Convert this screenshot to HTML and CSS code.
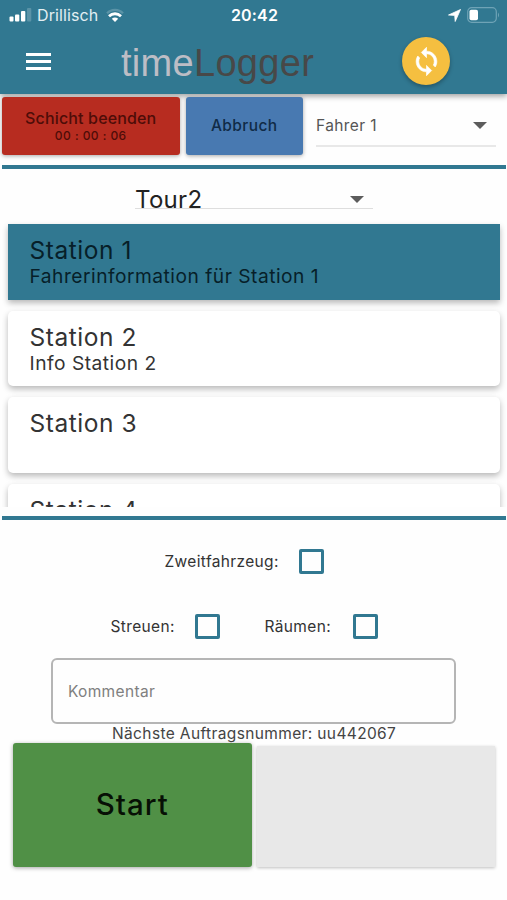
FILE: index.html
```html
<!DOCTYPE html>
<html lang="de">
<head>
<meta charset="utf-8">
<title>timeLogger</title>
<link rel="stylesheet" href="styles.css">
</head>
<body>
<header class="header">
  <div class="status">
    <div class="carrier">
      <svg class="signal" width="24" height="14" viewBox="0 0 24 14" fill="#fff"><rect x="0.5" y="8.5" width="4" height="5" rx="1"/><rect x="6" y="6.500" width="4.300" height="7" rx="1"/><rect x="12" y="3" width="4.300" height="10.500" rx="1"/><rect x="18" y="0" width="4.300" height="13.500" rx="1" opacity=".2"/></svg>
      <span class="carrier-name">Drillisch</span>
      <svg class="wifi" width="18" height="15" viewBox="0 0 18 15" fill="none" stroke="#fff"><path d="M1 5.2C5.500.7 12.500.7 17 5.200" stroke-width="2.300" opacity=".2"/><path d="M3 8.200C6.500 4.900 11.500 4.900 15 8.200" stroke-width="2.800"/><path d="M5.800 10.800Q9 8 12.200 10.800L9 14Z" fill="#fff" stroke="none"/></svg>
    </div>
    <span class="clock">20:42</span>
    <div class="power">
      <svg width="13" height="13" viewBox="0 0 13 13"><path d="M12.500.5 7.200 12.500 6.700 6.400.5 6Z" fill="#fff" stroke="#fff" stroke-width=".8" stroke-linejoin="round"/></svg>
      <svg width="33" height="16" viewBox="0 0 33 16"><rect x=".7" y=".7" width="28.600" height="14.600" rx="4" fill="none" stroke="#6fa3b6" stroke-width="1.200"/><rect x="2.500" y="2.800" width="8.500" height="10.400" rx="1.800" fill="#fff"/><path d="M31 5.500q2 2.500 0 5Z" fill="#6fa3b6"/></svg>
    </div>
  </div>
  <div class="toolbar">
    <svg class="menu" width="25" height="17" viewBox="0 0 25 17" fill="#fff"><path d="M0 0h25v3H0zM0 7h25v3H0zM0 14h25v3H0z"/></svg>
    <h1 class="brand"><span class="brand-light">time</span>Logger</h1>
    <button class="sync" aria-label="Sync"><svg width="31" height="31" viewBox="0 0 24 24" fill="#fff" stroke="#fff" stroke-width=".5"><path d="M12 4V1L8 5l4 4V6c3.310 0 6 2.690 6 6 0 1.010-.25 1.970-.7 2.800l1.460 1.460C19.540 15.030 20 13.570 20 12c0-4.420-3.580-8-8-8zm0 14c-3.310 0-6-2.690-6-6 0-1.010.25-1.970.7-2.800L5.240 7.740C4.460 8.970 4 10.430 4 12c0 4.420 3.580 8 8 8v3l4-4-4-4v3z"/></svg></button>
  </div>
</header>
<main>
  <section class="shift">
    <button class="btn end"><span class="end-label">Schicht beenden</span><span class="timer">00 : 00 : 06</span></button>
    <button class="btn cancel"><span>Abbruch</span></button>
    <div class="driver"><span>Fahrer 1</span><i class="caret"></i></div>
  </section>
  <section class="tour-area">
    <div class="tour"><span>Tour2</span><i class="caret"></i></div>
    <div class="list">
      <article class="card active"><h2>Station 1</h2><p>Fahrerinformation für Station 1</p></article>
      <article class="card"><h2>Station 2</h2><p>Info Station 2</p></article>
      <article class="card"><h2>Station 3</h2></article>
      <article class="card"><h2>Station 4</h2></article>
    </div>
  </section>
  <section class="options">
    <div class="row second"><label><span>Zweitfahrzeug:</span><i class="box"></i></label></div>
    <div class="row jobs"><label class="spread"><span>Streuen:</span><i class="box"></i></label><label><span>Räumen:</span><i class="box"></i></label></div>
  </section>
  <div class="comment"><span>Kommentar</span></div>
  <p class="next">Nächste Auftragsnummer: uu442067</p>
  <div class="actions"><button class="btn start"><span>Start</span></button><button class="btn empty" aria-label="Stop"></button></div>
</main>
</body>
</html>
```
FILE: styles.css
```css
* { box-sizing: border-box; }
body { margin: 0; width: 507px; height: 900px; overflow: hidden; background: #fefefe; color: #333; font-family: Inter, sans-serif; }
h1, h2, p { margin: 0; font-weight: 400; }
svg { display: block; }
span { white-space: nowrap; }
button { border: 0; padding: 0; font: inherit; color: inherit; }

.header { height: 94px; background: #317891; box-shadow: 0 2px 6px rgba(0,0,0,.4); }
.status { display: grid; grid-template-columns: 1fr auto 1fr; align-items: center; height: 30px; padding: 0 7px 0 9px; color: #fff; }
.carrier { display: flex; align-items: center; }
.carrier-name { margin-left: 4px; font-size: 16px; line-height: 20px; letter-spacing: .1px; color: #e3eff3; }
.wifi { margin-left: 8px; }
.clock { font-size: 16px; font-weight: 600; letter-spacing: .2px; }
.power { display: flex; justify-content: flex-end; align-items: center; gap: 6px; }
.toolbar { display: flex; align-items: center; height: 62px; padding-left: 26px; }
.brand { width: 193px; margin: 3px 88px 0 70px; font: 38px/44px "Liberation Sans", sans-serif; letter-spacing: .3px; color: #484848; white-space: nowrap; }
.brand-light { color: #bdbdc5; }
.sync { display: grid; place-items: center; width: 48px; height: 48px; border-radius: 50%; background: #f5bf40; box-shadow: 0 2px 4px rgba(0,0,0,.3); }

.shift { display: flex; height: 75px; margin: 0 1px 0 2px; padding: 2.500px 10px 0 0; border-bottom: 4px solid #317891; }
.btn { display: flex; align-items: center; justify-content: center; border-radius: 3px; box-shadow: 0 1px 4px rgba(0,0,0,.35); }
.end { flex-direction: column; width: 177.500px; height: 58px; background: #b72c20; color: #4e0d08; }
.end-label { font-size: 16px; line-height: 20px; font-weight: 500; letter-spacing: .15px; }
.timer { font-size: 12px; line-height: 15px; font-weight: 500; letter-spacing: .45px; }
.cancel { width: 116.500px; height: 58px; margin-left: 6.500px; padding-bottom: 1px; background: #4879b1; color: #102b47; font-size: 15.500px; font-weight: 500; letter-spacing: .4px; }
.driver { display: flex; align-items: center; justify-content: space-between; width: 180px; height: 50px; margin-left: 13.500px; padding: 10px 9px 0 0; border-bottom: 2px solid #e8e8e8; font-size: 15.500px; letter-spacing: .4px; color: #555; }
.caret { border: 7px solid transparent; border-top-color: #5c5c5c; border-bottom: 0; }

.tour-area { height: 351px; margin: 0 1px 0 2px; padding-top: 18px; border-bottom: 4px solid #317891; }
.tour { display: flex; align-items: center; justify-content: space-between; width: 238px; height: 22px; margin-left: 133px; padding: 3px 9px 0 0; border-bottom: 1px solid #dedede; font-size: 24px; letter-spacing: .3px; color: #222; }
.list { height: 298px; padding: 15px 6px 0 5.500px; overflow: hidden; }
.card { height: 75.500px; margin-bottom: 11px; padding: 12px 22px; border-radius: 5px; background: #fff; box-shadow: 0 3px 6px rgba(0,0,0,.28); }
.card.active { border-radius: 0; background: #317891; color: #071f29; }
.card h2 { font-size: 24.500px; line-height: 29px; letter-spacing: .55px; }
.card p { font-size: 19.200px; line-height: 23px; letter-spacing: .49px; }

.options { padding-top: 25px; font-size: 15.500px; letter-spacing: .35px; }
.row { display: flex; height: 32px; }
.second { padding-left: 164.500px; }
.jobs { margin-top: 33px; padding-left: 110.500px; }
label { display: flex; align-items: center; }
.row label { justify-content: space-between; width: 159px; }
.jobs label { width: 113px; }
.jobs .spread { width: 109px; margin-right: 45px; }
.box { width: 25px; height: 25px; border: 3px solid #317891; border-radius: 2px; }

.comment { display: flex; align-items: center; width: 405px; height: 66px; margin: 16px 0 0 51.400px; padding-left: 14.500px; border: 2px solid #b5b5b5; border-radius: 6px; font-size: 15.500px; letter-spacing: .35px; color: #808080; }
.next { height: 19px; padding-left: 112px; font-size: 15.500px; line-height: 20px; letter-spacing: .37px; white-space: nowrap; color: #444; }
.actions { display: flex; gap: 5px; padding-left: 13px; }
.start { width: 238.500px; height: 123.500px; padding-bottom: 1px; background: #509046; color: #071005; font-size: 29.500px; font-weight: 500; letter-spacing: 1px; }
.empty { width: 238px; height: 120.500px; margin-top: 3px; border-radius: 0; background: #e8e8e8; box-shadow: 0 1px 3px rgba(0,0,0,.25); }
```
